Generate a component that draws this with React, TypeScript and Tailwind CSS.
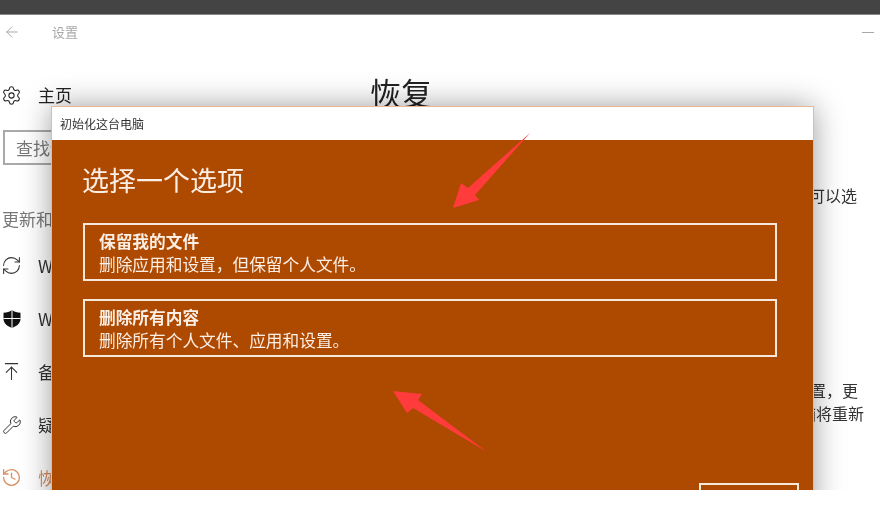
import { ArrowLeft, ArrowUpToLine, History, RefreshCw, Settings, Wrench } from "lucide-react";
import type { ReactNode } from "react";

const font = { fontFamily: '"Noto Sans CJK SC", "Noto Sans", sans-serif' };

function ShieldIcon() {
  return (
    <svg viewBox="0 0 20 20" className="size-[20px]">
      <path d="M10 1 C7.5 3 5 3.6 1.5 3.8 V10 C1.5 14.5 6 17.5 10 19 C14 17.5 18.5 14.5 18.5 10 V3.8 C15 3.6 12.5 3 10 1 Z" fill="#111" />
      <path d="M10 1 V19 M1.5 9.5 H18.5" stroke="#fff" strokeWidth="1" />
    </svg>
  );
}

function NavItem({ icon, label, active = false }: { icon: ReactNode; label: string; active?: boolean }) {
  return (
    <div className={`flex h-[53px] items-center gap-[16px] pl-px text-[17px] whitespace-nowrap ${active ? "text-[#d98f62]" : "text-[#333]"}`}>
      <span className="flex w-[21px] shrink-0 justify-center">{icon}</span>
      <span>{label}</span>
    </div>
  );
}

function OptionCard({ title, desc }: { title: string; desc: string }) {
  return (
    <div className="flex h-[58px] flex-col justify-center border-2 border-[#f7e8dc] pl-[14px] pt-[2px] text-[16.7px] leading-[23px] text-[#fbeee4]">
      <p className="font-bold">{title}</p>
      <p>{desc}</p>
    </div>
  );
}

export default function App() {
  return (
    <div className="h-[511px] w-[880px] overflow-hidden bg-white blur-[0.5px]" style={font}>
      <div className="h-[15px] border-b border-[#888] bg-[#444]" />

      <div className="relative h-[475px] overflow-hidden bg-white">
        {/* title row */}
        <div className="flex h-[34px] items-center pl-[3px] pr-[6px] text-[#a8a8a8]">
          <ArrowLeft className="size-[18px]" strokeWidth={1.3} />
          <span className="ml-[31px] text-[13px]">设置</span>
          <span className="ml-auto h-px w-[12px] bg-[#aaa]" />
        </div>

        <div className="flex">
          {/* left nav, its labels run under the dialog */}
          <aside className="w-[51px] shrink-0">
            <div className="mt-[20px] flex h-[52px] items-center gap-[16px] pl-px text-[17px] whitespace-nowrap text-[#222]">
              <span className="flex w-[21px] shrink-0 justify-center">
                <Settings className="size-[21px]" strokeWidth={1.2} />
              </span>
              <span>主页</span>
            </div>
            <div className="overflow-hidden">
              <div className="ml-[3px] mt-[9px] flex h-[35px] w-[200px] items-center border-2 border-[#a9a9a9] pl-[11px] text-[17px] whitespace-nowrap text-[#777]">
                查找设置
              </div>
              <p className="mt-[41px] pl-[2px] text-[17px] leading-[26px] whitespace-nowrap text-[#777]">更新和安全</p>
              <div className="mt-[7px]">
                <NavItem icon={<RefreshCw className="size-[21px]" strokeWidth={1.2} />} label="Windows 更新" />
                <NavItem icon={<ShieldIcon />} label="Windows 安全中心" />
                <NavItem icon={<ArrowUpToLine className="size-[21px]" strokeWidth={1.2} />} label="备份" />
                <NavItem icon={<Wrench className="size-[20px]" strokeWidth={1.2} />} label="疑难解答" />
                <NavItem active icon={<History className="size-[21px]" strokeWidth={1.5} />} label="恢复" />
              </div>
            </div>
          </aside>

          {/* main column */}
          <main className="flex-1 text-[#333]">
            <h1 className="ml-[319px] mt-[20px] text-[31px] leading-[46px] text-[#222]">恢复</h1>
            <div className="mt-[69px] pr-[23px] text-right text-[16px] leading-[23px]">重置电脑时可以选</div>
            <div className="mt-[172px] pr-[16px] text-right text-[16px] leading-[23px]">
              <p className="pr-[6px]">初始化设置，更</p>
              <p>电脑将重新</p>
            </div>
          </main>
        </div>

        {/* dialog */}
        <div className="absolute left-[51px] top-[91px] flex h-[430px] w-[763px] flex-col border border-[#e9b899] shadow-[0_0_28px_rgba(0,0,0,0.38)]">
          <div className="flex h-[33px] shrink-0 items-center bg-white pl-[8px] text-[12px] text-[#333]">初始化这台电脑</div>
          <div className="flex flex-1 flex-col bg-[#ae4900] pl-[31px] pr-[36px]">
            <h2 className="-ml-px mt-[20px] text-[27px] leading-[40px] text-[#fbeee4]">选择一个选项</h2>
            <div className="mt-[23px] flex flex-col gap-[18px]">
              <OptionCard title="保留我的文件" desc="删除应用和设置，但保留个人文件。" />
              <OptionCard title="删除所有内容" desc="删除所有个人文件、应用和设置。" />
            </div>
            <div className="ml-auto mr-[-22px] mt-[126px] h-[36px] w-[100px] border-2 border-[#f7e8dc]" />
          </div>
        </div>
      </div>

      {/* red annotation arrows */}
      <svg viewBox="0 0 880 511" className="pointer-events-none absolute left-0 top-0 h-[511px] w-[880px]">
        <polygon points="530,133 475,195 479,200 453,208 461,183 468,188" fill="#ff3b3b" />
        <polygon points="487,452 418,400 422,394 393,391 407,413 413,408" fill="#ff3b3b" />
      </svg>
    </div>
  );
}
